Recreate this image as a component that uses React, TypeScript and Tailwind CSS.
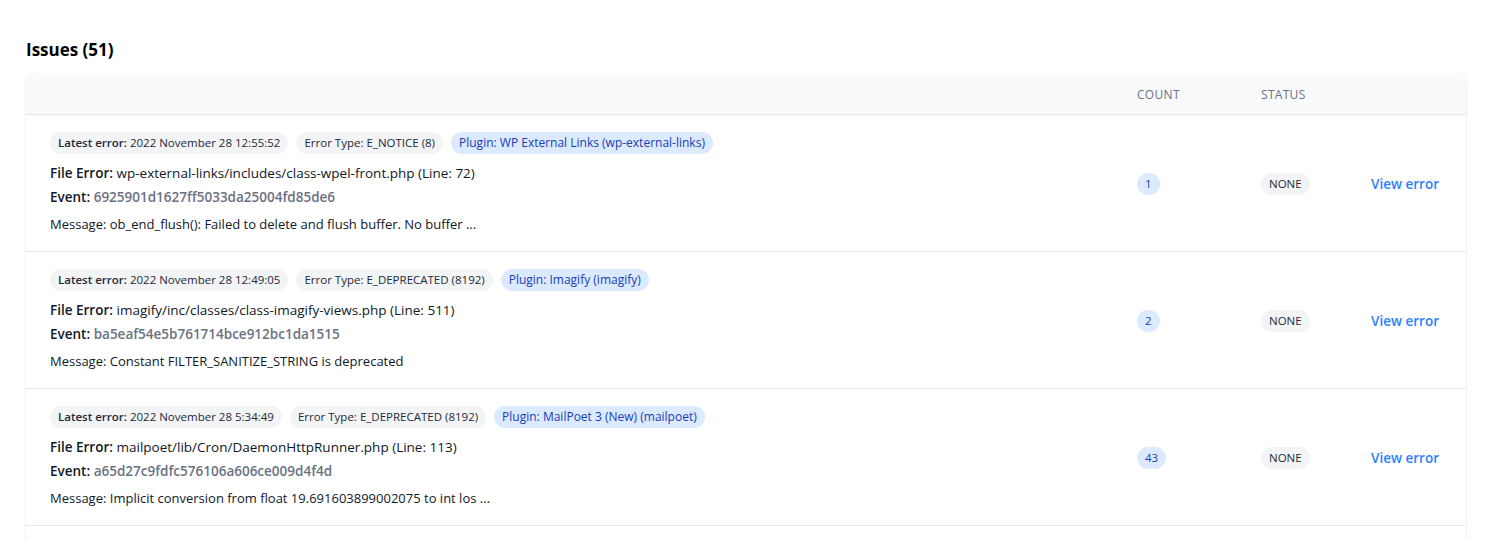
import React from "react";

type Issue = {
  latest: string;
  type: string;
  plugin: string;
  file: string;
  event: string;
  message: string;
  count: string;
};

const issues: Issue[] = [
  {
    latest: "2022 November 28 12:55:52",
    type: "E_NOTICE (8)",
    plugin: "WP External Links (wp-external-links)",
    file: "wp-external-links/includes/class-wpel-front.php (Line: 72)",
    event: "6925901d1627ff5033da25004fd85de6",
    message: "ob_end_flush(): Failed to delete and flush buffer. No buffer ...",
    count: "1",
  },
  {
    latest: "2022 November 28 12:49:05",
    type: "E_DEPRECATED (8192)",
    plugin: "Imagify (imagify)",
    file: "imagify/inc/classes/class-imagify-views.php (Line: 511)",
    event: "ba5eaf54e5b761714bce912bc1da1515",
    message: "Constant FILTER_SANITIZE_STRING is deprecated",
    count: "2",
  },
  {
    latest: "2022 November 28 5:34:49",
    type: "E_DEPRECATED (8192)",
    plugin: "MailPoet 3 (New) (mailpoet)",
    file: "mailpoet/lib/Cron/DaemonHttpRunner.php (Line: 113)",
    event: "a65d27c9fdfc576106a606ce009d4f4d",
    message: "Implicit conversion from float 19.691603899002075 to int los ...",
    count: "43",
  },
];

const grid = "grid grid-cols-[1fr_124px_110px_119px]";

export default function App() {
  return (
    <div
      className="min-h-[540px] bg-white pl-[26px] pr-6 pt-[36px] text-[#111827]"
      style={{ fontFamily: '"Open Sans", "Noto Sans", sans-serif' }}
    >
      <h2 className="mb-[10px] text-[17px] font-bold leading-7 text-black">Issues (51)</h2>
      <div className="overflow-hidden rounded-lg bg-white shadow-[0_0_2px_rgba(0,0,0,0.08),0_1px_3px_rgba(0,0,0,0.06)]">
        <div className={`${grid} border-b border-gray-200 bg-gray-50`}>
          <div className="px-6 pb-[11px] pt-[13px] text-xs leading-4">&nbsp;</div>
          <div className="px-6 pb-[11px] pt-[13px] text-xs font-medium uppercase leading-4 tracking-wide text-gray-500">Count</div>
          <div className="px-6 pb-[11px] pt-[13px] text-xs font-medium uppercase leading-4 tracking-wide text-gray-500">Status</div>
          <div className="px-6 pb-[11px] pt-[13px]" />
        </div>
        {issues.map((it, i) => (
          <div key={i} className={`${grid} border-b border-gray-200`}>
            <div className="px-6 pb-[17px] pt-[17px]">
              <div className="flex flex-wrap gap-2">
                <span className="rounded-full bg-gray-100 px-2 text-[11.5px] leading-[22px] text-gray-800">
                  <span className="font-semibold">Latest error:</span> {it.latest}
                </span>
                <span className="rounded-full bg-gray-100 px-2 text-[11.5px] leading-[22px] text-gray-800">
                  Error Type: {it.type}
                </span>
                <span className="rounded-full bg-blue-100 px-2 text-[12px] font-medium leading-[22px] text-blue-800">
                  Plugin: {it.plugin}
                </span>
              </div>
              <div className="mt-[7px] text-[13.5px] leading-6 text-gray-900">
                <span className="font-semibold">File Error:</span> {it.file}
              </div>
              <div className="text-[13.5px] leading-6 text-gray-900">
                <span className="font-semibold">Event:</span>{" "}
                <span className="font-semibold text-gray-500">{it.event}</span>
              </div>
              <div className="mt-[5px] text-[13px] leading-5 text-gray-900">Message: {it.message}</div>
            </div>
            <div className="flex items-center px-6 pt-[2px]">
              <span className="rounded-full bg-blue-100 px-2 text-[11.5px] leading-[22px] text-blue-800">{it.count}</span>
            </div>
            <div className="flex items-center px-6 pt-[2px]">
              <span className="rounded-full bg-gray-100 px-2 text-[11.5px] leading-[22px] text-gray-800">NONE</span>
            </div>
            <div className="flex items-center px-6 pt-[2px]">
              <a href="#" className="text-[13.5px] font-semibold text-blue-500">View error</a>
            </div>
          </div>
        ))}
        <div className="h-8" />
      </div>
    </div>
  );
}
